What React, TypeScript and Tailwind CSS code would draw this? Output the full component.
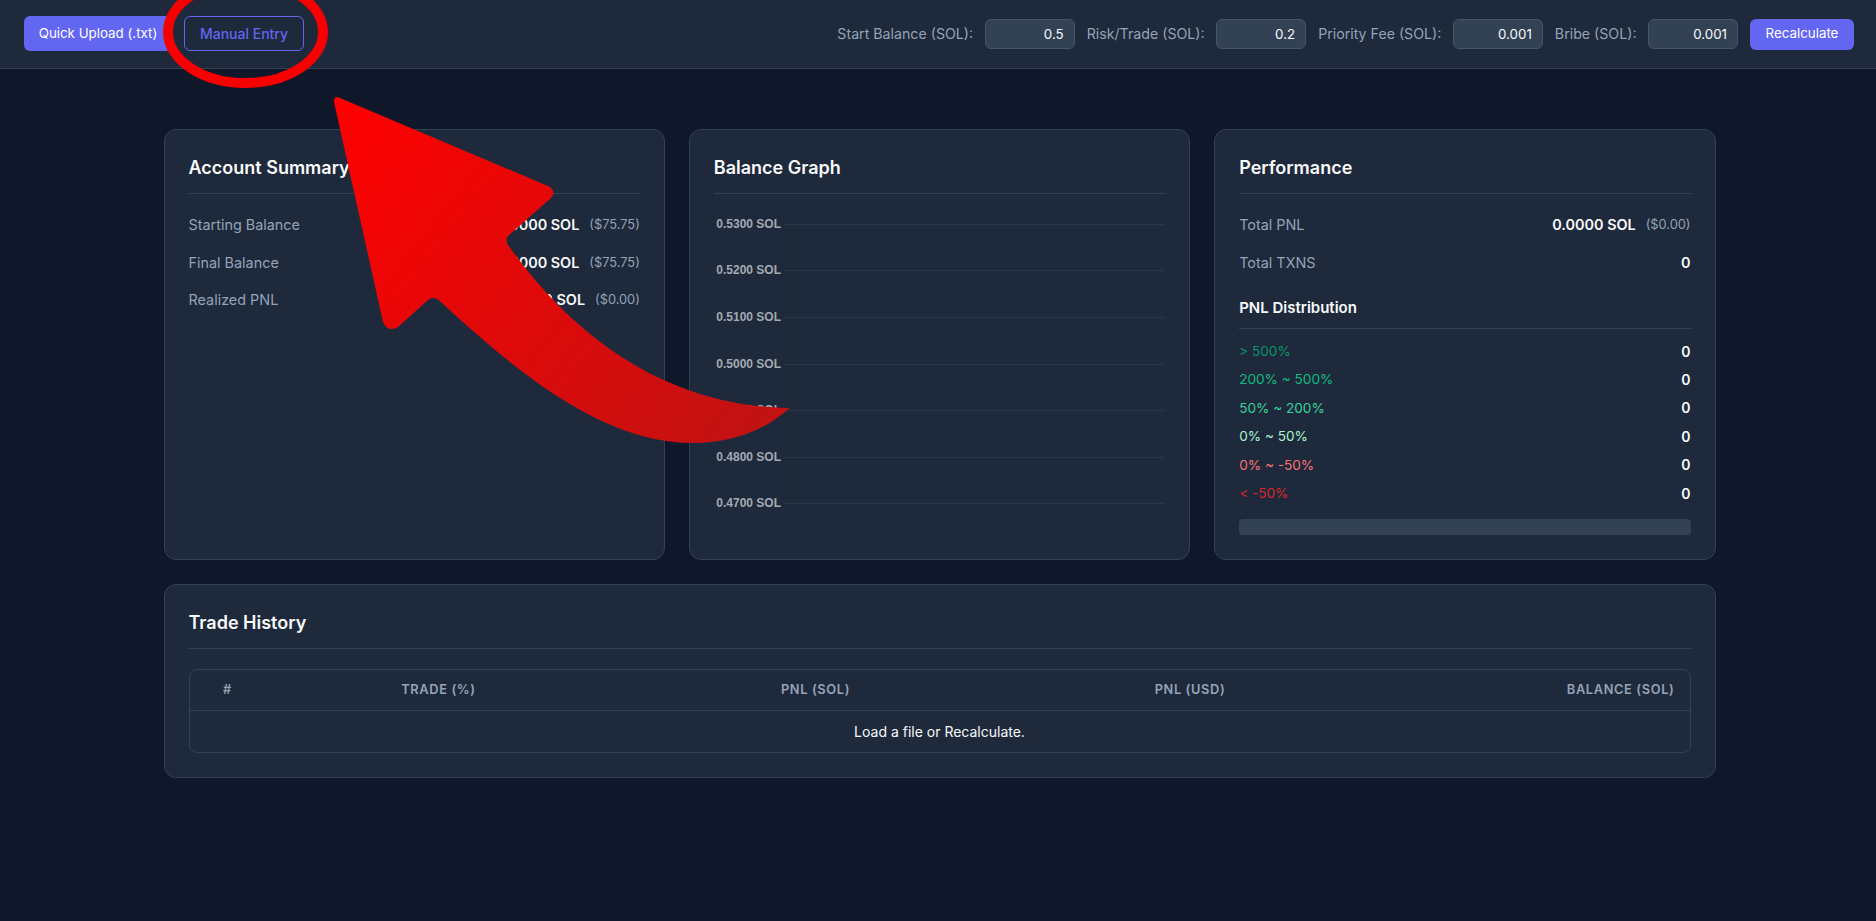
import React from "react"

const fields = [
  { label: "Start Balance (SOL):", value: "0.5" },
  { label: "Risk/Trade (SOL):", value: "0.2" },
  { label: "Priority Fee (SOL):", value: "0.001" },
  { label: "Bribe (SOL):", value: "0.001" },
]

const distribution = [
  { label: "> 500%", color: "text-[#059669]" },
  { label: "200% ~ 500%", color: "text-[#10b981]" },
  { label: "50% ~ 200%", color: "text-[#34d399]" },
  { label: "0% ~ 50%", color: "text-[#a7f3d0]" },
  { label: "0% ~ -50%", color: "text-[#f87171]" },
  { label: "< -50%", color: "text-[#dc2626]" },
]

const ticks = [
  { label: "0.5300 SOL", y: 30 },
  { label: "0.5200 SOL", y: 76 },
  { label: "0.5100 SOL", y: 123 },
  { label: "0.5000 SOL", y: 170 },
  { label: "0.4900 SOL", y: 216 },
  { label: "0.4800 SOL", y: 263 },
  { label: "0.4700 SOL", y: 309 },
]

function CardTitle({ children }: { children: React.ReactNode }) {
  return (
    <h2 className="text-[18px] leading-[27px] font-semibold text-[#f8fafc] pb-[12px] border-b border-[#334155] mb-[12px]">
      {children}
    </h2>
  )
}

function StatRow({ label, value, usd }: { label: string; value: string; usd?: string }) {
  return (
    <div className="flex items-center justify-between h-[38px] last:h-[36px] text-[14.4px]">
      <span className="text-[#94a3b8]">{label}</span>
      <span className="flex items-center gap-[10px]">
        <span className="font-semibold text-[#f8fafc]">{value}</span>
        {usd && <span className="text-[12.8px] text-[#94a3b8]">{usd}</span>}
      </span>
    </div>
  )
}

function BalanceChart() {
  return (
    <svg viewBox="0 0 451 340" className="w-[451px] h-[340px] block">
      <line x1="79.5" y1="30" x2="79.5" y2="309" stroke="#1c2738" strokeWidth="1" />
      {ticks.map((t) => (
        <g key={t.label}>
          <line x1="70" y1={t.y + 0.5} x2="451" y2={t.y + 0.5} stroke="#2b3749" strokeWidth="1" />
          <text
            x="67"
            y={t.y + 4}
            textAnchor="end"
            fontSize="12"
            fontWeight="700"
            fontFamily="'Liberation Sans', Arial, sans-serif"
            fill="#a3a9b3"
          >
            {t.label}
          </text>
        </g>
      ))}
    </svg>
  )
}

export default function App() {
  return (
    <div className="relative min-h-screen overflow-hidden bg-[#0f172a] font-[Inter,sans-serif] text-[#f8fafc]">
      <header className="flex items-center justify-between h-[69px] pl-[24px] pr-[22px] bg-[#1e293b] border-b border-[#334155]">
        <div className="flex items-center gap-[12px] pb-[1px]">
          <button className="h-[35px] w-[148px] rounded-md bg-[#6366f1] text-[13.33px] font-normal text-white whitespace-nowrap">
            Quick Upload (.txt)
          </button>
          <button className="h-[35px] w-[120px] rounded-md border border-[#6366f1] text-[14px] font-medium text-[#6366f1] whitespace-nowrap">
            Manual Entry
          </button>
        </div>
        <div className="flex items-center gap-[12px]">
          {fields.map((f) => (
            <label key={f.label} className="flex items-center gap-[11.5px] text-[14.2px] text-[#94a3b8] whitespace-nowrap">
              {f.label}
              <input
                readOnly
                type="text"
                defaultValue={f.value}
                className="w-[90px] h-[30px] px-[10px] rounded-md bg-[#334155] border border-[#475569] text-[13.33px] text-right text-[#f8fafc]"
              />
            </label>
          ))}
          <button className="h-[31px] w-[104px] rounded-md bg-[#6366f1] text-[13.33px] font-normal text-white">
            Recalculate
          </button>
        </div>
      </header>

      <main className="w-[1552px] ml-[163.5px] pt-[60px]">
        <div className="grid grid-cols-3 gap-x-[24px]">
          <section className="h-[431px] rounded-xl bg-[#1e293b] border border-[#334155] p-[24px]">
            <CardTitle>Account Summary</CardTitle>
            <StatRow label="Starting Balance" value="0.5000 SOL" usd="($75.75)" />
            <StatRow label="Final Balance" value="0.5000 SOL" usd="($75.75)" />
            <StatRow label="Realized PNL" value="0.0000 SOL" usd="($0.00)" />
          </section>

          <section className="h-[431px] rounded-xl bg-[#1e293b] border border-[#334155] p-[24px]">
            <h2 className="text-[18px] leading-[27px] font-semibold text-[#f8fafc] pb-[12px] border-b border-[#334155]">
              Balance Graph
            </h2>
            <BalanceChart />
          </section>

          <section className="h-[431px] rounded-xl bg-[#1e293b] border border-[#334155] p-[24px]">
            <CardTitle>Performance</CardTitle>
            <StatRow label="Total PNL" value="0.0000 SOL" usd="($0.00)" />
            <StatRow label="Total TXNS" value="0" />
            <h3 className="mt-[15px] pb-[10px] border-b border-[#334155] text-[15px] leading-[21px] font-semibold text-[#f8fafc]">
              PNL Distribution
            </h3>
            <div className="mt-[8px]">
              {distribution.map((d) => (
                <div key={d.label} className="flex items-center justify-between h-[28.4px] text-[14px]">
                  <span className={`text-[13.6px] ${d.color}`}>{d.label}</span>
                  <span className="font-semibold text-[#f8fafc]">0</span>
                </div>
              ))}
            </div>
            <div className="mt-[12px] h-[16px] rounded bg-[#334155]" />
          </section>
        </div>

        <section className="mt-[24px] h-[194px] rounded-xl bg-[#1e293b] border border-[#334155] p-[24px]">
          <h2 className="text-[18px] leading-[27px] font-semibold text-[#f8fafc] pb-[12px] border-b border-[#334155] mb-[20px]">
            Trade History
          </h2>
          <div className="rounded-lg border border-[#334155] overflow-hidden">
            <table className="w-full table-fixed border-collapse">
              <colgroup>
                <col className="w-[76px]" />
                <col className="w-[346px]" />
                <col className="w-[408px]" />
                <col className="w-[341px]" />
                <col />
              </colgroup>
              <thead>
                <tr className="h-[40px] border-b border-[#334155] text-[12.8px] font-semibold tracking-[0.64px] text-[#94a3b8]">
                  <th className="text-center font-semibold">#</th>
                  <th className="text-center font-semibold">TRADE (%)</th>
                  <th className="text-center font-semibold">PNL (SOL)</th>
                  <th className="text-center font-semibold">PNL (USD)</th>
                  <th className="text-right font-semibold pr-[15px]">BALANCE (SOL)</th>
                </tr>
              </thead>
              <tbody>
                <tr className="h-[42px]">
                  <td colSpan={5} className="text-center text-[14px] text-[#f8fafc]">
                    Load a file or Recalculate.
                  </td>
                </tr>
              </tbody>
            </table>
          </div>
        </section>
      </main>

      {/* red annotation drawn over the page */}
      <svg className="absolute top-0 left-0 w-[1876px] h-[921px] pointer-events-none" viewBox="0 0 1876 921">
        <defs>
          <linearGradient id="arrowFill" gradientUnits="userSpaceOnUse" x1="336" y1="97" x2="760" y2="430">
            <stop offset="0" stopColor="#ff0000" />
            <stop offset="1" stopColor="#c21212" />
          </linearGradient>
        </defs>
        <ellipse cx="245.5" cy="32" rx="77.5" ry="51" fill="none" stroke="#f80000" strokeWidth="10" />
        <path
          fill="url(#arrowFill)"
          d="M334 102 Q334 95 340 98 L548 186 Q557 191 551 198 L508 236 Q505 240 508 245 C590 360 690 407 790 408 C762 433 727 443 693 443 C610 443 530 385 441 302 Q434 295 428 300 L398 327 Q388 333 383 322 Z"
        />
      </svg>
    </div>
  )
}
